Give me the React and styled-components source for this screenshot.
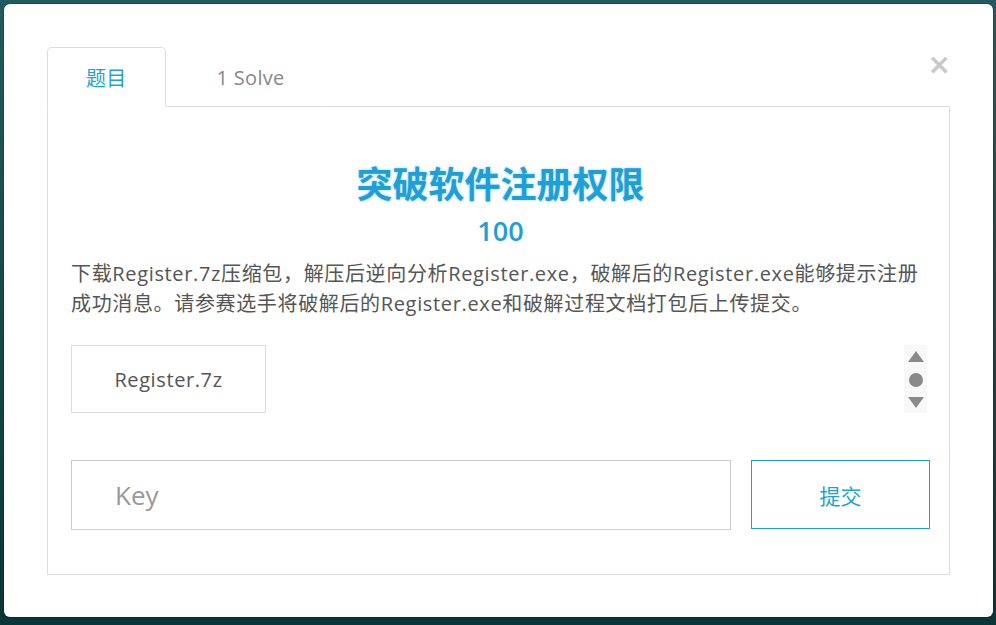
import React from 'react';
import styled, { createGlobalStyle } from 'styled-components';

const blue = '#1e9fd8';

const GlobalStyle = createGlobalStyle`
    html, body {
        margin: 0;
        padding: 0;
    }
    body {
        width: 996px;
        height: 625px;
        overflow: hidden;
        background: linear-gradient(180deg, #235a5e 0%, #17484b 50%, #0b3437 100%);
        font-family: "Open Sans", "Noto Sans CJK SC", sans-serif;
    }
`;

const Backdrop = styled.div`
    padding: 4px 3px 8px 4px;
`;

const Modal = styled.div`
    position: relative;
    background: #fff;
    border-radius: 6px;
    box-shadow: 0 0 0 1px rgba(0, 0, 0, 0.15);
    padding: 43px 43px 42px 43px;
    height: 613px;
    box-sizing: border-box;
`;

const Close = styled.button`
    position: absolute;
    top: 47px;
    right: 42px;
    border: none;
    background: none;
    padding: 0;
    color: #c8c8c8;
    font-family: "DejaVu Sans", sans-serif;
    font-size: 28px;
    font-weight: bold;
    line-height: 1;
    cursor: pointer;
`;

const TabList = styled.div`
    display: flex;
    align-items: flex-end;
    height: 60px;
`;

const Tab = styled.div`
    height: 60px;
    box-sizing: border-box;
    padding: 0 38px 0 ${(p) => (p.active ? '38px' : '50px')};
    display: flex;
    align-items: center;
    font-size: 20px;
    letter-spacing: 0.3px;
    color: ${(p) => (p.active ? blue : '#888')};
    border: 1px solid ${(p) => (p.active ? '#ddd' : 'transparent')};
    border-bottom: 1px solid ${(p) => (p.active ? '#fff' : '#ddd')};
    border-radius: 5px 5px 0 0;
    background: #fff;
`;

const TabFill = styled.div`
    flex: 1;
    border-bottom: 1px solid #ddd;
`;

const Panel = styled.div`
    border: 1px solid #ddd;
    border-top: none;
    padding: 52px 19px 44px 23px;
`;

const Title = styled.h2`
    margin: 0;
    text-align: center;
    font-family: "Noto Sans CJK SC", sans-serif;
    font-size: 36px;
    font-weight: 700;
    line-height: 46px;
    color: ${blue};
    text-shadow: 0 0 3px rgba(30, 159, 216, 0.45);
`;

const Score = styled.div`
    margin-top: 6px;
    text-align: center;
    font-size: 27px;
    font-weight: 600;
    line-height: 40px;
    color: ${blue};
`;

const Description = styled.p`
    margin: 8px 0 0;
    font-size: 20px;
    letter-spacing: 0.65px;
    line-height: 30px;
    color: #555;
`;

const FileRow = styled.div`
    margin-top: 26px;
    display: flex;
    justify-content: space-between;
    align-items: stretch;
`;

const FileButton = styled.a`
    width: 195px;
    height: 68px;
    box-sizing: border-box;
    border: 1px solid #ddd;
    display: flex;
    align-items: center;
    justify-content: center;
    font-size: 20px;
    letter-spacing: 0.6px;
    color: #555;
    text-decoration: none;
`;

const Scroller = styled.div`
    width: 23px;
    margin-right: 3px;
    background: #f8f8f8;
    display: flex;
    flex-direction: column;
    align-items: center;
    justify-content: space-between;
    padding: 6px 0 5px;
`;

const SubmitRow = styled.form`
    margin-top: 47px;
    display: flex;
    gap: 20px;
`;

const KeyInput = styled.input`
    flex: 1;
    height: 70px;
    box-sizing: border-box;
    border: 1px solid #ccc;
    padding: 0 0 0 43px;
    font-family: "Open Sans", sans-serif;
    font-size: 26px;
    color: #555;
    outline: none;
    &::placeholder {
        color: #999;
    }
`;

const SubmitButton = styled.button`
    width: 179px;
    height: 69px;
    border-width: 1px;
    border-style: solid;
    border-color: ${blue};
    background: #fff;
    color: ${blue};
    font-family: "Noto Sans CJK SC", sans-serif;
    font-size: 21px;
    cursor: pointer;
`;

const App = () => (
    <>
        <GlobalStyle />
        <Backdrop>
            <Modal>
                <Close aria-label="close">×</Close>
                <TabList>
                    <Tab active>题目</Tab>
                    <Tab>1 Solve</Tab>
                    <TabFill />
                </TabList>
                <Panel>
                    <Title>突破软件注册权限</Title>
                    <Score>100</Score>
                    <Description>
                        下载Register.7z压缩包，解压后逆向分析Register.exe，破解后的Register.exe能够提示注册成功消息。请参赛选手将破解后的Register.exe和破解过程文档打包后上传提交。
                    </Description>
                    <FileRow>
                        <FileButton href="#">Register.7z</FileButton>
                        <Scroller>
                            <svg width="16" height="11" viewBox="0 0 16 11">
                                <path d="M8 0 L16 11 L0 11 Z" fill="#8a8a8a" />
                            </svg>
                            <svg width="14" height="14" viewBox="0 0 14 14">
                                <circle cx="7" cy="7" r="7" fill="#8a8a8a" />
                            </svg>
                            <svg width="16" height="11" viewBox="0 0 16 11">
                                <path d="M0 0 L16 0 L8 11 Z" fill="#8a8a8a" />
                            </svg>
                        </Scroller>
                    </FileRow>
                    <SubmitRow onSubmit={(e) => e.preventDefault()}>
                        <KeyInput placeholder="Key" />
                        <SubmitButton type="submit">提交</SubmitButton>
                    </SubmitRow>
                </Panel>
            </Modal>
        </Backdrop>
    </>
);

export default App;
